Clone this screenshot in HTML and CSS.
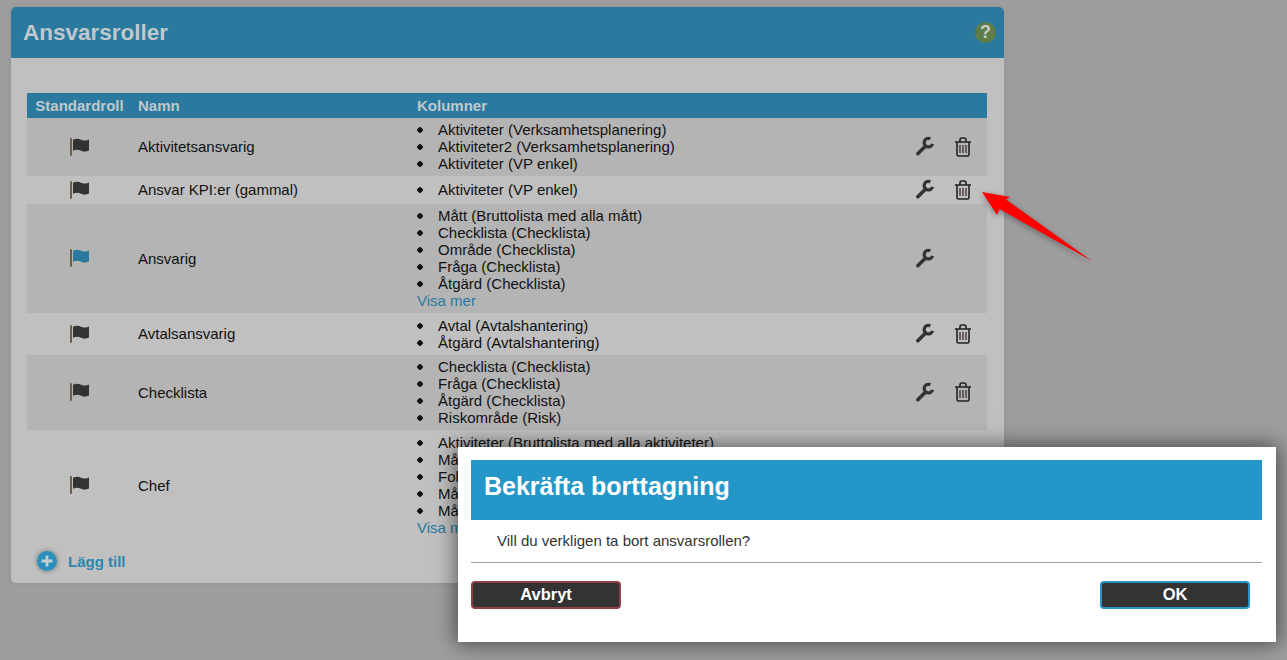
FILE: index.html
```html
<!DOCTYPE html>
<html lang="sv">
<head>
<meta charset="utf-8">
<title>Ansvarsroller</title>
<link rel="stylesheet" href="styles.css">
</head>
<body>
<svg class="defs" width="0" height="0" aria-hidden="true">
  <symbol id="flag" viewBox="0 0 22 18">
    <rect class="pole" x="1" y="0" width="2" height="18" rx="1"/>
    <path d="M4 1.800c3-1.600 6-1.200 8 0s4.300 1.100 8-.4v11.100c-3.700 1.500-6 1.400-8 .3s-5-1.600-8 0z"/>
  </symbol>
  <symbol id="wrench" viewBox="0 0 20 20">
    <path class="w-handle" d="M2.800 17.200 10.600 9.400"/>
    <path class="w-head" d="M15.400 2.300A4.300 4.300 0 1 0 17.600 7.400"/>
  </symbol>
  <symbol id="trash" viewBox="0 0 18 20">
    <path class="t-line" d="M1 5h16M3 5v12.500q0 1.500 1.500 1.500h9q1.500 0 1.500-1.500V5M6 4.500V2.800Q6 1 7.800 1h2.400Q12 1 12 2.800v1.700"/>
    <path class="t-bars" d="M6 8v8M9 8v8M12 8v8"/>
  </symbol>
</svg>

<main class="panel">
  <header class="panel-head">
    <h1>Ansvarsroller</h1>
    <span class="help">?</span>
  </header>
  <div class="panel-body">
    <table class="roles">
      <colgroup>
        <col class="c-std"><col class="c-name"><col class="c-cols"><col class="c-edit"><col class="c-del">
      </colgroup>
      <thead>
        <tr><th class="center">Standardroll</th><th class="name">Namn</th><th>Kolumner</th><th></th><th></th></tr>
      </thead>
      <tbody>
        <tr>
          <td class="center"><svg class="flag"><use href="#flag"/></svg></td>
          <td class="name">Aktivitetsansvarig</td>
          <td><ul><li>Aktiviteter (Verksamhetsplanering)</li><li>Aktiviteter2 (Verksamhetsplanering)</li><li>Aktiviteter (VP enkel)</li></ul></td>
          <td><svg class="wrench"><use href="#wrench"/></svg></td>
          <td><svg class="trash"><use href="#trash"/></svg></td>
        </tr>
        <tr>
          <td class="center"><svg class="flag"><use href="#flag"/></svg></td>
          <td class="name">Ansvar KPI:er (gammal)</td>
          <td><ul><li>Aktiviteter (VP enkel)</li></ul></td>
          <td><svg class="wrench"><use href="#wrench"/></svg></td>
          <td><svg class="trash"><use href="#trash"/></svg></td>
        </tr>
        <tr>
          <td class="center"><svg class="flag flag-on"><use href="#flag"/></svg></td>
          <td class="name">Ansvarig</td>
          <td><ul><li>Mått (Bruttolista med alla mått)</li><li>Checklista (Checklista)</li><li>Område (Checklista)</li><li>Fråga (Checklista)</li><li>Åtgärd (Checklista)</li></ul><a class="more" href="#">Visa mer</a></td>
          <td><svg class="wrench"><use href="#wrench"/></svg></td>
          <td></td>
        </tr>
        <tr class="roomy">
          <td class="center"><svg class="flag"><use href="#flag"/></svg></td>
          <td class="name">Avtalsansvarig</td>
          <td><ul><li>Avtal (Avtalshantering)</li><li>Åtgärd (Avtalshantering)</li></ul></td>
          <td><svg class="wrench"><use href="#wrench"/></svg></td>
          <td><svg class="trash"><use href="#trash"/></svg></td>
        </tr>
        <tr>
          <td class="center"><svg class="flag"><use href="#flag"/></svg></td>
          <td class="name">Checklista</td>
          <td><ul><li>Checklista (Checklista)</li><li>Fråga (Checklista)</li><li>Åtgärd (Checklista)</li><li>Riskområde (Risk)</li></ul></td>
          <td><svg class="wrench"><use href="#wrench"/></svg></td>
          <td><svg class="trash"><use href="#trash"/></svg></td>
        </tr>
        <tr class="roomier">
          <td class="center"><svg class="flag"><use href="#flag"/></svg></td>
          <td class="name">Chef</td>
          <td><ul><li>Aktiviteter (Bruttolista med alla aktiviteter)</li><li>Mått (Bruttolista med alla mått)</li><li>Fokusområde (Mål)</li><li>Mål (Mål)</li><li>Mått (Mål)</li></ul><a class="more" href="#">Visa mer</a></td>
          <td></td>
          <td></td>
        </tr>
      </tbody>
    </table>
    <a class="add" href="#">
      <span class="add-icon"><svg viewBox="0 0 20 20" width="20" height="20"><path d="M10 4.500v11M4.500 10h11"/></svg></span>
      <span>Lägg till</span>
    </a>
  </div>
</main>

<svg class="arrow" width="130" height="90" viewBox="0 0 130 90" aria-hidden="true">
  <path d="M12 2 40 7 36 9.500 122 71 29.500 19 27 25z"/>
</svg>

<section class="dialog" role="dialog">
  <h2>Bekräfta borttagning</h2>
  <p>Vill du verkligen ta bort ansvarsrollen?</p>
  <hr>
  <div class="actions">
    <button class="btn btn-cancel" type="button">Avbryt</button>
    <button class="btn btn-ok" type="button">OK</button>
  </div>
</section>
</body>
</html>
```

FILE: styles.css
```css
* { box-sizing: border-box; }

html, body {
  height: 100%;
  overflow: hidden;
}

body {
  margin: 0;
  padding: 7px 0 0 11px;
  background: #9e9e9e;
  color: #111;
  font-family: "Liberation Sans", Arial, sans-serif;
  font-size: 15px;
  line-height: 17px;
}

.defs { position: absolute; }

.panel {
  width: 993px;
  height: 576px;
  background: #c0c0c0;
  border-radius: 5px;
  box-shadow: 0 0 6px rgba(0, 0, 0, .08);
}

.panel-head {
  height: 51px;
  padding: 0 8px 0 12px;
  display: flex;
  align-items: center;
  justify-content: space-between;
  background: #2b799e;
  border-radius: 5px 5px 0 0;
}

.panel-head h1 {
  margin: 0;
  font-size: 22.500px;
  line-height: 26px;
  font-weight: 700;
  color: #bfc8cc;
}

.help {
  width: 21px;
  height: 21px;
  border-radius: 50%;
  background: #5a7d4a;
  color: #c9cdc6;
  font-size: 18px;
  font-weight: 700;
  line-height: 21px;
  text-align: center;
}

.panel-body {
  padding: 35px 17px 0 16px;
}

.roles {
  width: 960px;
  table-layout: fixed;
  border-collapse: collapse;
}

.c-std { width: 105px; }
.c-name { width: 285px; }
.c-edit { width: 41px; }
.c-del { width: 42px; }

.roles th {
  height: 25px;
  padding: 0;
  background: #2b799e;
  color: #c0c8cc;
  font-weight: 700;
  text-align: left;
}

.roles td {
  padding: 3px 0 4px;
  vertical-align: middle;
}

.roles tbody tr:nth-child(odd) { background: #b4b4b4; }
.roles tbody tr:nth-child(even) { background: #c0c0c0; }
.roles tbody tr:last-child { background: #c0c0c0; }

.roles .roomy td { padding: 3.500px 0 4.500px; }
.roles .roomier td { padding: 4px 0 5px; }

.roles .center { text-align: center; }
.roles td.name, .roles th.name { padding-left: 6px; }

.roles ul {
  margin: 0;
  padding: 0;
  list-style: none;
}

.roles li {
  padding-left: 21px;
  background: radial-gradient(circle at 3px 9px, #111 2.500px, transparent 3px);
}

.more {
  color: #2b799e;
  text-decoration: none;
}

.flag {
  display: block;
  width: 22px;
  height: 18px;
  margin: 0 auto;
  fill: #333;
}

.pole { fill: #6d5f42; }
.flag-on { fill: #2b799e; }

.wrench {
  display: block;
  width: 20px;
  height: 21px;
  margin: 0 auto;
}

.w-handle {
  fill: none;
  stroke: #333;
  stroke-width: 3.600;
  stroke-linecap: round;
}

.w-head {
  fill: none;
  stroke: #333;
  stroke-width: 3.200;
}

.trash {
  display: block;
  width: 18px;
  height: 20px;
  margin-left: 9px;
}

.t-line {
  fill: none;
  stroke: #222;
  stroke-width: 1.600;
}

.t-bars {
  fill: none;
  stroke: #4a3838;
  stroke-width: 1.400;
}

.add {
  display: inline-flex;
  align-items: center;
  gap: 11px;
  margin: 10px 0 0 10px;
  color: #2b86b0;
  font-weight: 700;
  text-decoration: none;
}

.add-icon {
  width: 20px;
  height: 20px;
  border-radius: 50%;
  background: #2b8fbd;
  box-shadow: 0 0 3px 2px rgba(120, 120, 120, .45);
}

.add-icon svg {
  display: block;
  fill: none;
  stroke: #c6cdd0;
  stroke-width: 2.800;
}

.arrow {
  position: absolute;
  left: 970px;
  top: 190px;
  fill: #f00;
  filter: drop-shadow(0 2px 3px rgba(0, 0, 0, .35));
}

.dialog {
  position: absolute;
  left: 458px;
  top: 447px;
  width: 818px;
  height: 195px;
  padding: 13px 14px 0 13px;
  background: #fff;
  box-shadow: 0 0 20px 2px rgba(0, 0, 0, .55);
}

.dialog h2 {
  margin: 0;
  height: 60px;
  padding-left: 13px;
  background: #2596c8;
  color: #fff;
  font-size: 25px;
  line-height: 53px;
  font-weight: 700;
}

.dialog p {
  margin: 0;
  height: 42px;
  padding: 1px 0 0 26px;
  color: #333;
  line-height: 40px;
}

.dialog hr {
  margin: 0;
  height: 1px;
  border: 0;
  background: #a0a0a0;
}

.actions {
  display: flex;
  justify-content: space-between;
  margin-top: 18px;
  padding-right: 12px;
}

.btn {
  width: 150px;
  height: 28px;
  padding: 0 0 2px;
  border-radius: 4px;
  background: #333;
  color: #fff;
  font: 700 16.500px/20px "Liberation Sans", Arial, sans-serif;
}

.btn-cancel { border: 2px solid #8f4246; }
.btn-ok { border: 2px solid #2596c8; }
```
